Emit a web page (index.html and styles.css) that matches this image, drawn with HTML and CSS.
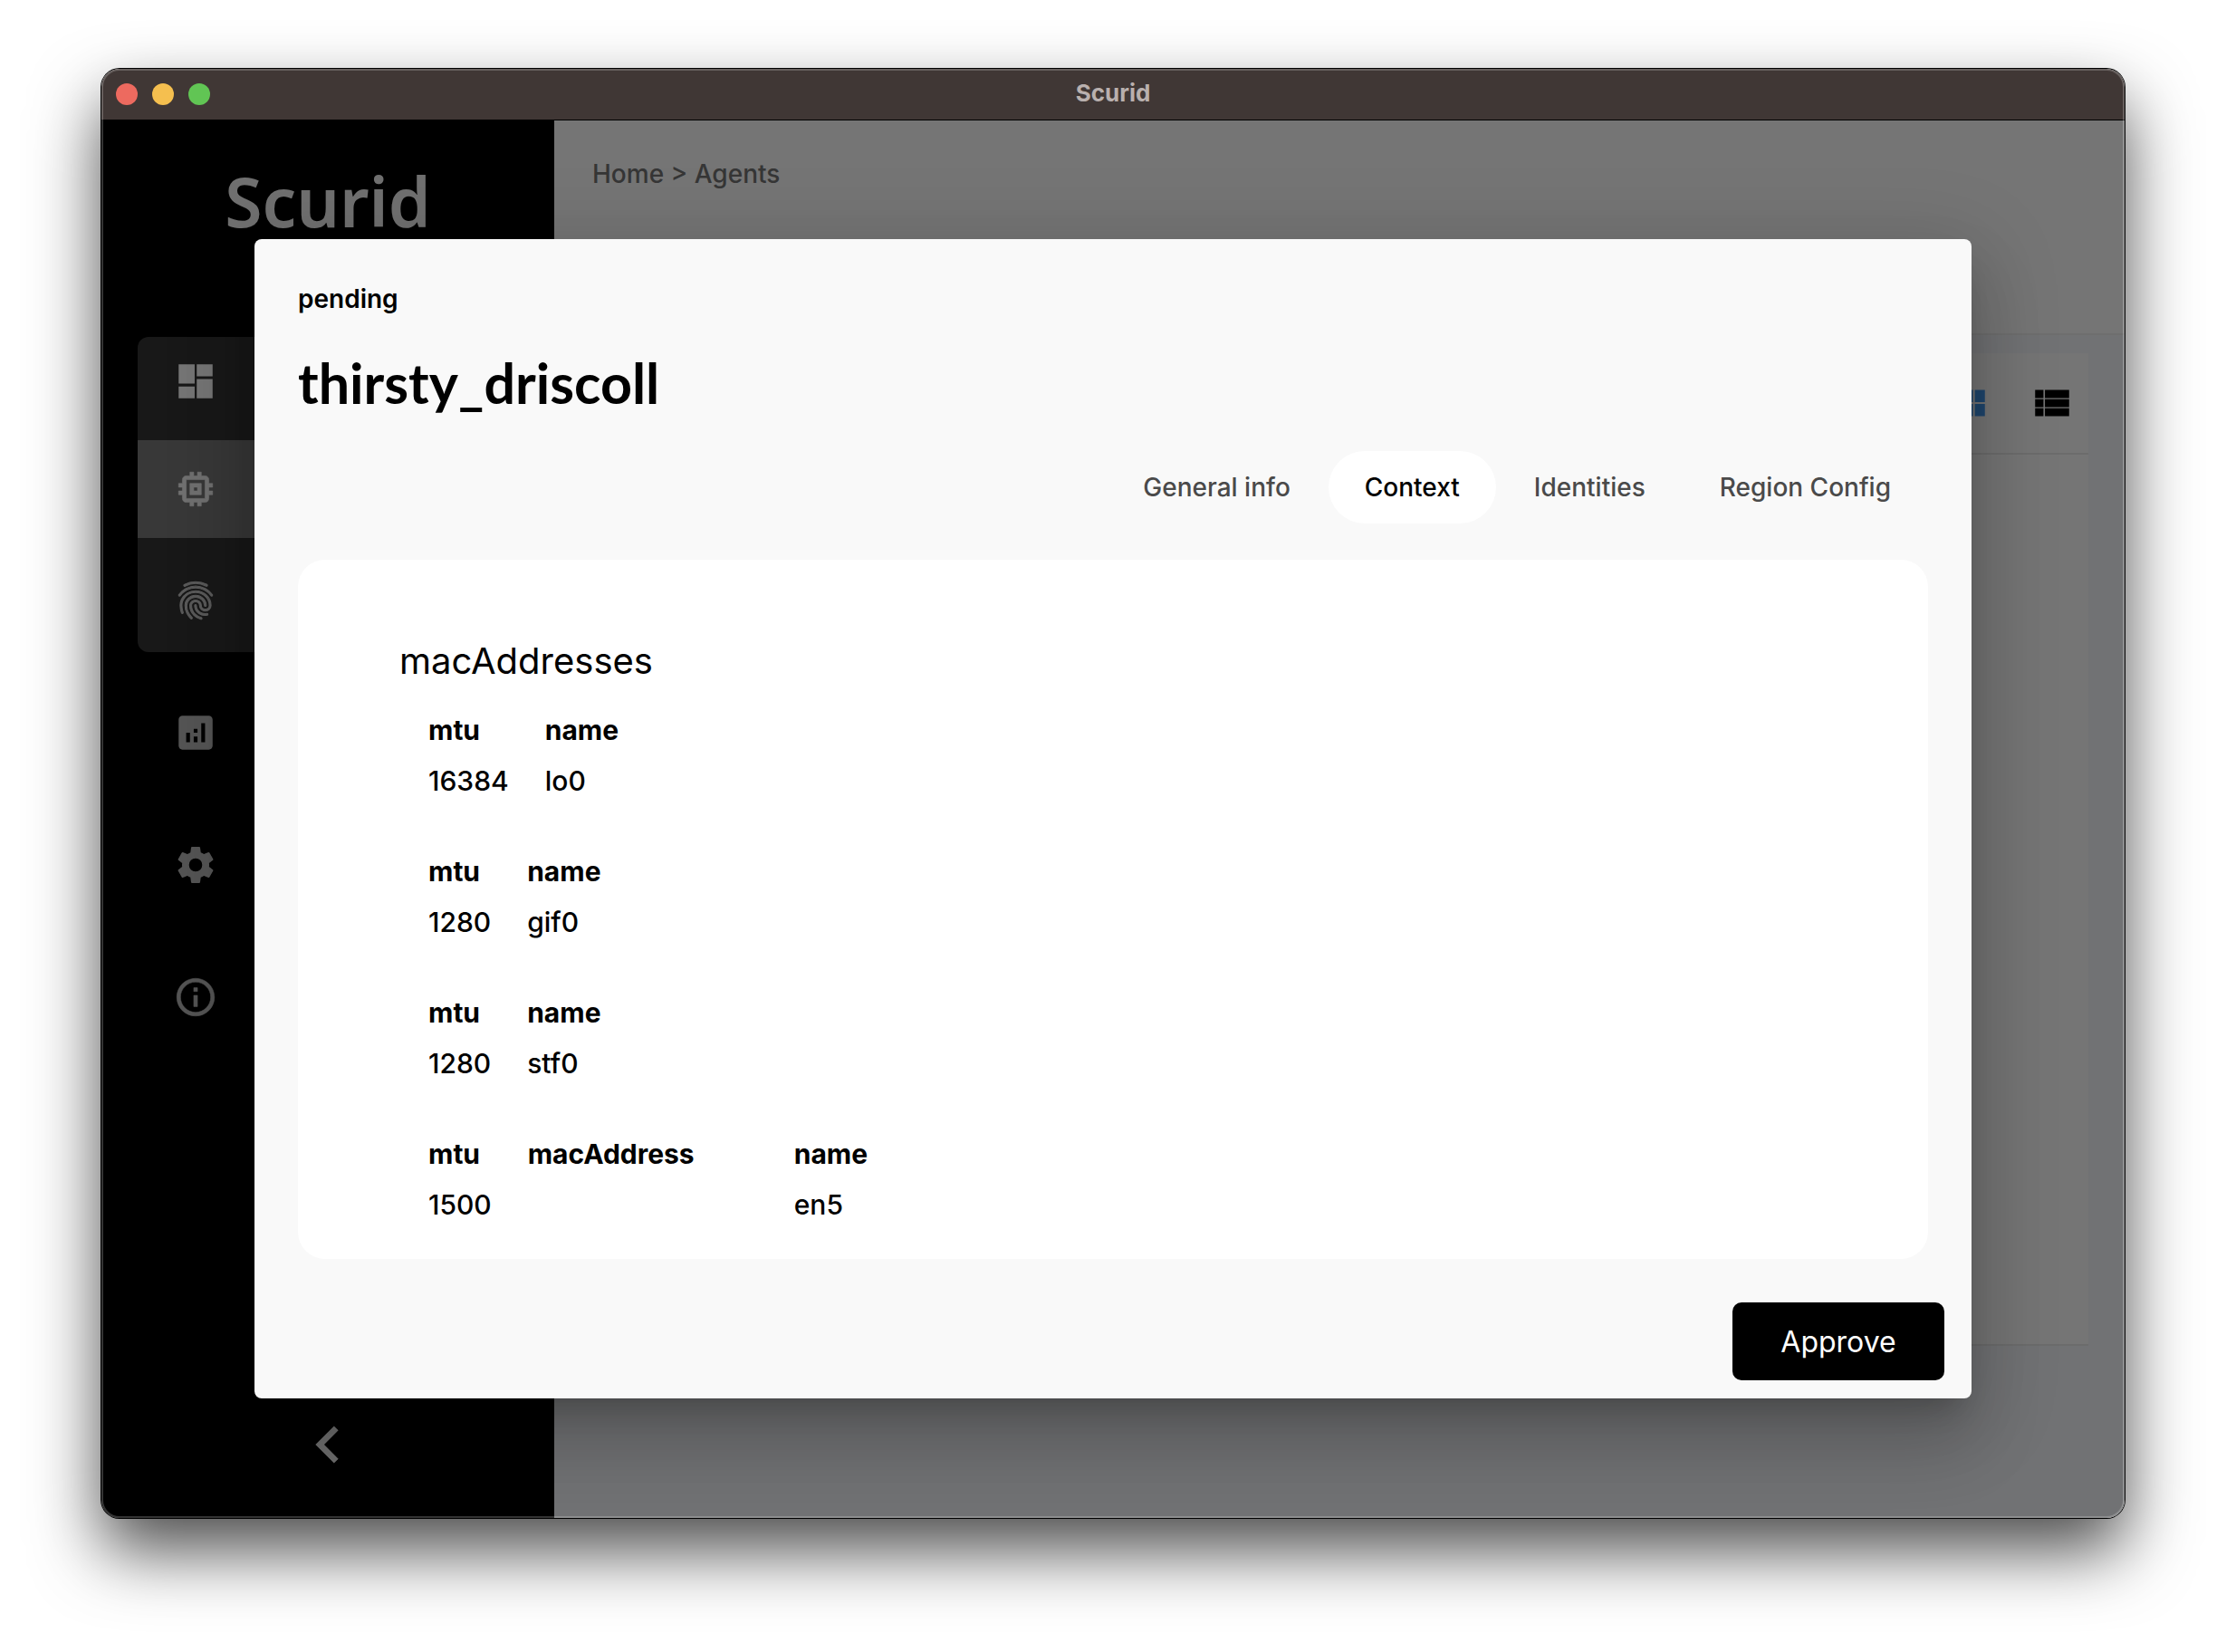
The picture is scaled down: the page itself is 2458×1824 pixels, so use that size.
FILE: index.html
```html
<!DOCTYPE html>
<html lang="en">
<head>
<meta charset="utf-8">
<title>Scurid</title>
<link rel="stylesheet" href="styles.css">
</head>
<body>
<div class="window">
  <header class="titlebar">
    <div class="lights">
      <span class="light light-close"></span>
      <span class="light light-minimise"></span>
      <span class="light light-zoom"></span>
    </div>
    <span class="titlebar-name">Scurid</span>
  </header>

  <div class="app">
    <aside class="sidebar">
      <div class="logo">Scurid</div>
      <nav class="nav">
        <div class="nav-group">
          <a class="nav-item nav-first" href="#dashboard" aria-label="Dashboard">
            <svg class="icon" viewBox="0 0 24 24"><path d="M3 3h8.5v10.2H3zM3 14.8h8.5V21H3zM12.6 3H21v6.3h-8.4zM12.6 10.8H21V21h-8.4z"/></svg>
          </a>
          <a class="nav-item nav-active" href="#agents" aria-label="Agents" aria-current="page">
            <svg class="icon" viewBox="0 0 24 24"><path d="M15 9H9v6h6V9zm-2 4h-2v-2h2v2zm8-2V9h-2V7c0-1.1-.9-2-2-2h-2V3h-2v2h-2V3H9v2H7c-1.1 0-2 .9-2 2v2H3v2h2v2H3v2h2v2c0 1.1.9 2 2 2h2v2h2v-2h2v2h2v-2h2c1.1 0 2-.9 2-2v-2h2v-2h-2v-2h2zm-4 6H7V7h10v10z" stroke="currentColor" stroke-width=".3"/></svg>
          </a>
          <a class="nav-item nav-last" href="#identities" aria-label="Identities">
            <svg class="icon icon-print" viewBox="0 0 24 24"><path d="M17.81 4.47c-.08 0-.16-.02-.23-.06C15.66 3.42 14 3 12.01 3c-1.98 0-3.86.47-5.57 1.41-.24.13-.54.04-.68-.2-.13-.24-.04-.55.2-.68C7.82 2.52 9.86 2 12.01 2c2.13 0 3.99.47 6.03 1.52.25.13.34.43.21.67-.09.18-.26.28-.44.28zM3.5 9.72c-.1 0-.2-.03-.29-.09-.23-.16-.28-.47-.12-.7.99-1.4 2.25-2.5 3.75-3.27C9.98 4.04 14 4.03 17.15 5.65c1.5.77 2.76 1.86 3.75 3.25.16.22.11.54-.12.7-.23.16-.54.11-.7-.12-.9-1.26-2.04-2.25-3.39-2.94-2.87-1.47-6.54-1.47-9.4.01-1.36.7-2.5 1.7-3.4 2.96-.08.14-.23.21-.39.21zm6.25 12.07c-.13 0-.26-.05-.35-.15-.87-.87-1.34-1.43-2.01-2.64-.69-1.23-1.05-2.73-1.05-4.34 0-2.97 2.54-5.39 5.66-5.39s5.66 2.42 5.66 5.39c0 .28-.22.5-.5.5s-.5-.22-.5-.5c0-2.42-2.09-4.39-4.66-4.39-2.57 0-4.66 1.97-4.66 4.39 0 1.44.32 2.77.93 3.85.64 1.15 1.08 1.64 1.85 2.42.19.2.19.51 0 .71-.11.1-.24.15-.37.15zm7.17-1.85c-1.19 0-2.24-.3-3.1-.89-1.49-1.01-2.38-2.65-2.38-4.39 0-.28.22-.5.5-.5s.5.22.5.5c0 1.41.72 2.74 1.94 3.56.71.48 1.54.71 2.54.71.24 0 .64-.03 1.04-.1.27-.05.53.13.58.41.05.27-.13.53-.41.58-.57.11-1.07.12-1.21.12zM14.91 22c-.04 0-.09-.01-.13-.02-1.59-.44-2.63-1.03-3.72-2.1-1.4-1.39-2.17-3.24-2.17-5.22 0-1.62 1.38-2.94 3.08-2.94 1.7 0 3.08 1.32 3.08 2.94 0 1.07.93 1.94 2.08 1.94s2.08-.87 2.08-1.94c0-3.77-3.25-6.83-7.25-6.83-2.84 0-5.44 1.58-6.61 4.03-.39.81-.59 1.76-.59 2.8 0 .78.07 2.01.67 3.61.1.26-.03.55-.29.64-.26.1-.55-.04-.64-.29-.49-1.31-.73-2.61-.73-3.96 0-1.2.23-2.29.68-3.24 1.33-2.79 4.28-4.6 7.51-4.6 4.55 0 8.25 3.51 8.25 7.83 0 1.62-1.38 2.94-3.08 2.94s-3.08-1.32-3.08-2.94c0-1.07-.93-1.94-2.08-1.94s-2.08.87-2.08 1.94c0 1.71.66 3.31 1.87 4.51.95.94 1.86 1.46 3.27 1.85.27.07.42.35.35.61-.05.23-.26.38-.47.38z"/></svg>
          </a>
        </div>
        <a class="nav-item nav-single" href="#analytics" aria-label="Analytics">
          <svg class="icon" viewBox="0 0 24 24"><path d="M19 3H5c-1.1 0-2 .9-2 2v14c0 1.1.9 2 2 2h14c1.1 0 2-.9 2-2V5c0-1.1-.9-2-2-2zM9 17H7v-5h2v5zm4 0h-2v-3h2v3zm0-5h-2v-2h2v2zm4 5h-2V7h2v10z"/></svg>
        </a>
        <a class="nav-item nav-single" href="#settings" aria-label="Settings">
          <svg class="icon" viewBox="0 0 24 24"><path d="M19.14 12.94c.04-.3.06-.61.06-.94 0-.32-.02-.64-.07-.94l2.03-1.58c.18-.14.23-.41.12-.61l-1.92-3.32c-.12-.22-.37-.29-.59-.22l-2.39.96c-.5-.38-1.03-.7-1.62-.94l-.36-2.54c-.04-.24-.24-.41-.48-.41h-3.84c-.24 0-.43.17-.47.41l-.36 2.54c-.59.24-1.13.57-1.62.94l-2.39-.96c-.22-.08-.47 0-.59.22L2.74 8.87c-.12.21-.08.47.12.61l2.03 1.58c-.05.3-.09.63-.09.94s.02.64.07.94l-2.03 1.58c-.18.14-.23.41-.12.61l1.92 3.32c.12.22.37.29.59.22l2.39-.96c.5.38 1.03.7 1.62.94l.36 2.54c.05.24.24.41.48.41h3.84c.24 0 .44-.17.47-.41l.36-2.54c.59-.24 1.13-.56 1.62-.94l2.39.96c.22.08.47 0 .59-.22l1.92-3.32c.12-.22.07-.47-.12-.61l-2.01-1.58zM12 15.5a3.5 3.5 0 1 1 0-7 3.5 3.5 0 0 1 0 7z"/></svg>
        </a>
        <a class="nav-item nav-single" href="#about" aria-label="About">
          <svg class="icon" viewBox="0 0 24 24"><path d="M11 7h2v2h-2zm0 4h2v6h-2zm1-9C6.48 2 2 6.48 2 12s4.48 10 10 10 10-4.48 10-10S17.52 2 12 2zm0 18c-4.41 0-8-3.59-8-8s3.59-8 8-8 8 3.59 8 8-3.59 8-8 8z" stroke="currentColor" stroke-width=".25"/></svg>
        </a>
      </nav>
      <button class="collapse" type="button" aria-label="Collapse sidebar">
        <svg class="icon-large" viewBox="0 0 24 24"><path d="M15.41 7.41 14 6l-6 6 6 6 1.41-1.41L10.83 12z"/></svg>
      </button>
    </aside>

    <main class="main">
      <header class="main-header"><a class="crumb" href="#home">Home</a> &gt; <a class="crumb" href="#agents">Agents</a></header>
      <div class="main-body">
        <section class="card">
          <div class="toolbar">
            <button class="view view-on" type="button" aria-label="Grid view">
              <svg class="icon" viewBox="0 0 24 24"><path d="M14.67 5v6.5H9.33V5h5.34zm1 6.5H21V5h-5.33v6.5zm-1 7.5v-6.5H9.33V19h5.34zm1-6.5V19H21v-6.5h-5.33zm-7.34 0H3V19h5.33v-6.5zm0-1V5H3v6.5h5.33z"/></svg>
            </button>
            <button class="view" type="button" aria-label="List view">
              <svg class="icon" viewBox="0 0 24 24"><path d="M3 5h4.4v4.3H3zM3 9.9h4.4v4.2H3zM3 14.7h4.4V19H3zM8.2 5H21v4.3H8.2zM8.2 9.9H21v4.2H8.2zM8.2 14.7H21V19H8.2z"/></svg>
            </button>
          </div>
        </section>
      </div>
    </main>

    <div class="backdrop">
      <section class="dialog" role="dialog" aria-modal="true" aria-labelledby="agent-name">
        <p class="status">pending</p>
        <h1 class="agent-name" id="agent-name">thirsty_driscoll</h1>
        <div class="tabs" role="tablist">
          <button class="tab" type="button" role="tab">General info</button>
          <button class="tab tab-on" type="button" role="tab" aria-selected="true">Context</button>
          <button class="tab" type="button" role="tab">Identities</button>
          <button class="tab" type="button" role="tab">Region Config</button>
        </div>
        <div class="panel" role="tabpanel">
          <h2 class="panel-title">macAddresses</h2>
          <div class="interfaces">
            <table class="interface">
              <thead><tr><th>mtu</th><th>name</th></tr></thead>
              <tbody><tr><td>16384</td><td>lo0</td></tr></tbody>
            </table>
            <table class="interface">
              <thead><tr><th>mtu</th><th>name</th></tr></thead>
              <tbody><tr><td>1280</td><td>gif0</td></tr></tbody>
            </table>
            <table class="interface">
              <thead><tr><th>mtu</th><th>name</th></tr></thead>
              <tbody><tr><td>1280</td><td>stf0</td></tr></tbody>
            </table>
            <table class="interface">
              <thead><tr><th>mtu</th><th class="mac">macAddress</th><th>name</th></tr></thead>
              <tbody><tr><td>1500</td><td></td><td>en5</td></tr></tbody>
            </table>
          </div>
        </div>
        <button class="approve" type="button">Approve</button>
      </section>
    </div>
  </div>
</div>
</body>
</html>
```
FILE: styles.css
```css
*,
*::before,
*::after {
  box-sizing: border-box;
}

body {
  margin: 0;
  min-height: 100vh;
  padding: 76px 112px 148px;
  display: flex;
  background: #fff;
  color: #000;
  font-family: Inter, "Liberation Sans", sans-serif;
  font-size: 28px;
}

h1,
h2,
p {
  margin: 0;
}

button {
  margin: 0;
  padding: 0;
  border: 0;
  background: none;
  color: inherit;
  font: inherit;
  cursor: pointer;
}

a {
  color: inherit;
  text-decoration: none;
}

.icon,
.icon-large {
  display: block;
  width: 50px;
  height: 50px;
  fill: currentColor;
}

.icon-large {
  width: 82px;
  height: 82px;
}

.icon-print {
  stroke: currentColor;
  stroke-width: 0.5;
}

/* Window frame */
.window {
  position: relative;
  flex: 1;
  display: flex;
  flex-direction: column;
  border-radius: 20px;
  box-shadow: 0 0 0 1px #000, 0 36px 76px rgba(0, 0, 0, 0.7);
}

.window::after {
  content: "";
  position: absolute;
  inset: 0;
  border: 2px solid rgba(255, 255, 255, 0.2);
  border-radius: 20px;
  pointer-events: none;
}

.titlebar {
  height: 57px;
  padding: 0 16px;
  display: grid;
  grid-template-columns: 1fr auto 1fr;
  align-items: center;
  background: #403735;
  border-bottom: 1px solid #000;
  border-radius: 20px 20px 0 0;
}

.lights {
  display: flex;
  gap: 16px;
}

.light {
  width: 24px;
  height: 24px;
  border-radius: 50%;
}

.light-close {
  background: #ed6a5f;
}

.light-minimise {
  background: #f5bf4f;
}

.light-zoom {
  background: #61c554;
}

.titlebar-name {
  padding-bottom: 3px;
  color: #b9b0ae;
  font-size: 26px;
  font-weight: 700;
}

.app {
  position: relative;
  flex: 1;
  display: flex;
  border-radius: 0 0 20px 20px;
  overflow: hidden;
}

/* Sidebar */
.sidebar {
  width: 500px;
  padding: 34px 40px 40px;
  display: flex;
  flex-direction: column;
  align-items: stretch;
  background: #000;
  color: #a8a8a8;
}

.logo {
  margin-bottom: 95px;
  color: #e0e0e0;
  font-family: "Noto Sans", "Open Sans", sans-serif;
  font-size: 75px;
  font-weight: 600;
  line-height: 110px;
  text-align: center;
}

.nav-group {
  margin-bottom: 16px;
  border-radius: 12px;
  background: #303030;
  overflow: hidden;
}

.nav-item {
  display: flex;
  align-items: center;
  padding: 29px 39px;
}

.nav-first {
  padding-top: 24px;
  padding-bottom: 40px;
  color: #ebebeb;
}

.nav-active {
  background: #707070;
  color: #e0e0e0;
}

.nav-last {
  padding-top: 44px;
  padding-bottom: 32px;
  color: #b4b4b4;
}

.nav-single {
  padding-top: 48px;
  padding-bottom: 48px;
}

.collapse {
  margin-top: auto;
  align-self: center;
  color: #dcdcdc;
}

/* Page behind the dialog */
.main {
  flex: 1;
  display: flex;
  flex-direction: column;
  background: #e2e4e8;
}

.main-header {
  height: 237px;
  padding: 39px 42px;
  border-bottom: 2px solid #dcdcdc;
  background: #ebebeb;
  color: #6c6c6c;
  font-weight: 500;
  line-height: 40px;
}

.main-body {
  flex: 1;
  display: flex;
  padding: 20px 40px 190px;
}

.card {
  flex: 1;
  border-bottom: 2px solid #d8d8d8;
  background: #ebebeb;
}

.toolbar {
  display: flex;
  justify-content: flex-end;
  gap: 43px;
  padding: 30px 15px;
  border-bottom: 2px solid #d8d8d8;
}

.view-on {
  color: #3e8cda;
}

/* Dialog */
.backdrop {
  position: absolute;
  inset: 0;
  padding: 131px 169px 132px;
  display: flex;
  background: rgba(0, 0, 0, 0.5);
}

.dialog {
  flex: 1;
  padding: 48px 48px 20px;
  display: flex;
  flex-direction: column;
  border-radius: 8px;
  background: #f9f9f9;
  box-shadow:
    0 22px 30px -14px rgba(0, 0, 0, 0.2),
    0 48px 76px 6px rgba(0, 0, 0, 0.14),
    0 18px 92px 16px rgba(0, 0, 0, 0.12);
}

.status {
  margin-bottom: 34px;
  font-weight: 600;
  line-height: 36px;
}

.agent-name {
  margin-bottom: 34px;
  font-family: Lato, sans-serif;
  font-size: 61px;
  font-weight: 700;
  line-height: 82px;
}

.tabs {
  margin-bottom: 40px;
  padding-right: 1px;
  display: flex;
  justify-content: flex-end;
  gap: 2px;
}

.tab {
  height: 80px;
  padding: 0 40px;
  border-radius: 40px;
  color: #4a4a4a;
  font-weight: 500;
}

.tab-on {
  background: #fff;
  color: #000;
}

.panel {
  flex: 1;
  margin-bottom: 48px;
  padding: 82px 112px 32px;
  border-radius: 30px;
  background: #fff;
}

.panel-title {
  margin-bottom: 18px;
  font-size: 40px;
  font-weight: 400;
  line-height: 60px;
}

.interfaces {
  padding-left: 32px;
  display: flex;
  flex-direction: column;
  align-items: flex-start;
  gap: 44px;
}

.interface {
  border-collapse: collapse;
  font-size: 30px;
  line-height: 56px;
}

.interface th,
.interface td {
  padding: 0 40px 0 0;
  text-align: left;
  font-weight: 500;
}

.interface th {
  font-weight: 700;
}

.interface .mac {
  min-width: 294px;
}

.approve {
  align-self: flex-end;
  width: 234px;
  height: 86px;
  margin-right: -18px;
  border-radius: 10px;
  background: #000;
  color: #fff;
  font-size: 32px;
}
```
